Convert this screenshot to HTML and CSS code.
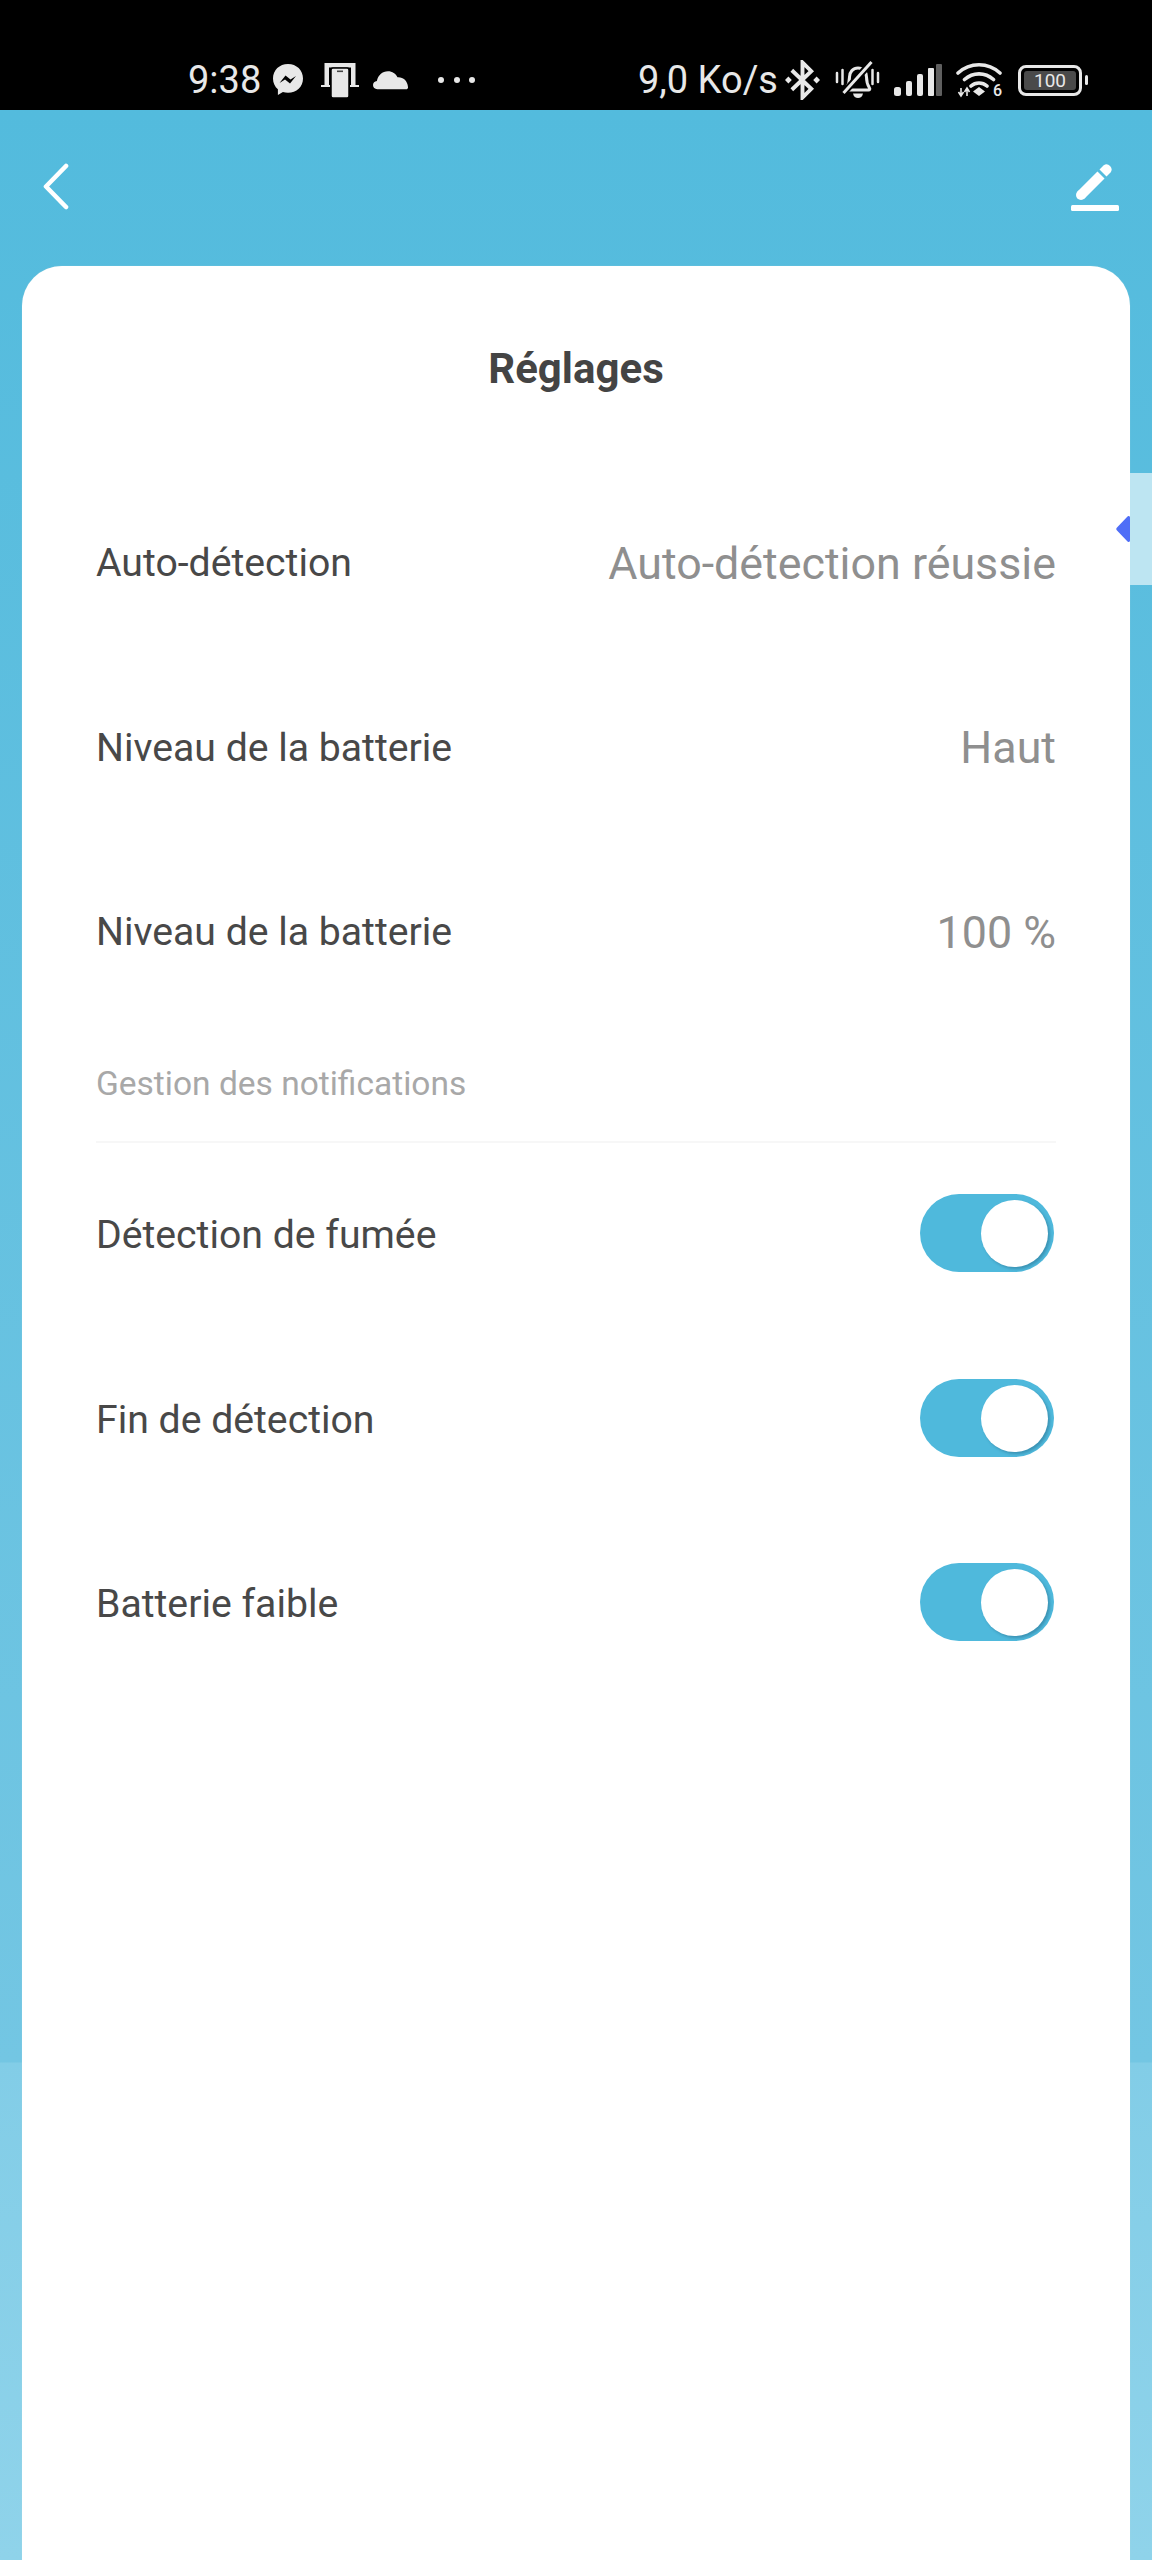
FILE: index.html
```html
<!DOCTYPE html>
<html lang="fr">
<head>
<meta charset="utf-8">
<title>Réglages</title>
<link rel="stylesheet" href="styles.css">
</head>
<body>
<div class="status">
  <div class="status-left">
    <span class="time">9:38</span>
    <svg class="ic-mess" viewBox="0 0 32 34"><path d="M16 1C7.500 1 1 7.200 1 15.400c0 4.400 1.900 8.200 4.900 10.800V32l5-2.900c1.600.5 3.300.7 5.100.7 8.500 0 15-6.200 15-14.400S24.500 1 16 1z" fill="#e8e8e8"/><path d="M7.500 20l6-7.500 5 4 5.500-3.500-6 7.500-5-4z" fill="#000"/></svg>
    <svg class="ic-cast" viewBox="0 0 38 36"><path d="M3.500 1h31v22H30V5.500H8V23H3.500z" fill="#e8e8e8"/><path d="M0 23h9v2H0zM29 23h9v2h-9z" fill="#e8e8e8"/><rect x="10" y="6" width="18" height="30" rx="2" fill="#e8e8e8" stroke="#000" stroke-width="1.500"/><rect x="16" y="8.500" width="6" height="1.600" fill="#444"/></svg>
    <svg class="ic-cloud" viewBox="0 0 36 20"><path d="M4.500 19.500C1.800 19.500 0 17.600 0 15.200c0-2.300 1.700-4 4-4.300C5.100 5.300 9.600 1 15.400 1c4.400 0 8.100 2.500 9.800 6.200 5.500-.5 10.300 3.400 10.800 10 .1 1.300-.7 2.300-2 2.300z" fill="#e8e8e8"/></svg>
    <span class="dots"><i></i><i></i><i></i></span>
  </div>
  <div class="status-right">
    <span class="speed">9,0 Ko/s</span>
    <svg class="ic-bt" viewBox="0 0 36 40"><path d="M7 10l20 19-9 9V2l9 9-20 19" fill="none" stroke="#e8e8e8" stroke-width="4"/><path d="M3.500 16.500L7 20l-3.500 3.500L0 20zM32.500 16.500L36 20l-3.500 3.500L29 20z" fill="#e8e8e8"/></svg>
    <svg class="ic-bell" viewBox="0 0 44 40"><path d="M11 28c2-3 3-6 3-11 0-5 3.500-9 8.500-9s8.500 4 8.500 9c0 5 1 8 3 11 .8 1.200 0 2-1 2H12c-1 0-1.800-.8-1-2z" fill="none" stroke="#e8e8e8" stroke-width="3"/><path d="M17.500 33.500h10c-.5 3-2.500 4.500-5 4.500s-4.500-1.500-5-4.500z" fill="#e8e8e8"/><path d="M8 33L36 2" stroke="#000" stroke-width="7"/><path d="M8 33L36 2" stroke="#e8e8e8" stroke-width="3"/><path d="M1.500 13v9M7 10v14M37 10v14M42.500 13v9" stroke="#e8e8e8" stroke-width="2.500" stroke-linecap="round"/></svg>
    <svg class="ic-signal" viewBox="0 0 48 32"><rect x="0" y="23" width="7" height="9" rx="2.500" fill="#e8e8e8"/><rect x="12" y="17" width="6" height="15" rx="2" fill="#e8e8e8"/><rect x="23" y="10" width="6" height="22" rx="2" fill="#e8e8e8"/><rect x="34" y="4" width="6" height="28" rx="1" fill="#e8e8e8"/><rect x="42" y="0" width="6" height="32" rx="1" fill="#5f5f5f"/></svg>
    <svg class="ic-wifi" viewBox="0 0 46 36"><path d="M2 11c12-11 30-11 42 0M8.500 17.500c8.500-7.500 20.500-7.500 29 0M15 24c4.500-4 11.500-4 16 0" fill="none" stroke="#e8e8e8" stroke-width="3.600" stroke-linecap="round"/><path d="M23 25l6 4.500-6 4.500-6-4.500z" fill="#e8e8e8"/><path d="M5 26v8M11 26v8M2.500 30L5 34l2.500-4M8.500 30L11 26l2.500 4" fill="none" stroke="#e8e8e8" stroke-width="1.600"/></svg>
    <span class="six">6</span>
    <span class="battery"><span class="battery-fill">100</span></span>
    <span class="battery-tip"></span>
  </div>
</div>
<div class="app">
  <div class="topbar">
    <svg class="ic-back" viewBox="0 0 28 48"><path d="M24 3L4 23.500 24 44" fill="none" stroke="#fff" stroke-width="4.600" stroke-linecap="round" stroke-linejoin="round"/></svg>
    <svg class="ic-edit" viewBox="0 0 48 48"><path d="M10 32L30 12" stroke="#fff" stroke-width="10"/><circle cx="10" cy="32" r="5" fill="#fff"/><path d="M28.500 6.500L32.500 2.500A5 5 0 0 1 39.500 9.500L35.500 13.500Z" fill="#fff"/><rect x="0" y="42" width="48" height="6" rx="1.500" fill="#fff"/></svg>
  </div>
  <main class="card">
    <h1 class="title">Réglages</h1>
    <div class="row"><span class="label">Auto-détection</span><span class="value">Auto-détection réussie</span></div>
    <div class="row"><span class="label">Niveau de la batterie</span><span class="value">Haut</span></div>
    <div class="row"><span class="label">Niveau de la batterie</span><span class="value">100 %</span></div>
    <div class="section">Gestion des notifications</div>
    <div class="row"><span class="label">Détection de fumée</span><span class="toggle"><span class="knob"></span></span></div>
    <div class="row"><span class="label">Fin de détection</span><span class="toggle"><span class="knob"></span></span></div>
    <div class="row"><span class="label">Batterie faible</span><span class="toggle"><span class="knob"></span></span></div>
  </main>
  <div class="side-tab">
    <svg class="side-arrow" viewBox="0 0 14 26"><path d="M14 1.500V24.500C14 26 12.500 26.500 11.500 25.500L1 14.500C0 13.500 0 12.500 1 11.500L11.500 .5C12.500 -.5 14 0 14 1.500Z" fill="#4f6ef7"/></svg>
  </div>
</div>
</body>
</html>
```
FILE: styles.css
```css
* { box-sizing: border-box; }
html, body { margin: 0; padding: 0; }
body {
  width: 1152px;
  height: 2560px;
  overflow: hidden;
  background: #000;
  font-family: Roboto, "Liberation Sans", sans-serif;
}
svg { display: block; flex: none; }

.status {
  height: 110px;
  background: #000;
  color: #e8e8e8;
  display: flex;
  justify-content: space-between;
  align-items: flex-end;
  padding: 0 64px 12px 188px;
}
.status-left, .status-right { display: flex; align-items: center; height: 36px; }
.time { font-size: 38px; line-height: 36px; width: 74px; }
.speed { font-size: 38px; line-height: 36px; width: 147px; }
.ic-mess { width: 32px; height: 34px; margin-left: 10px; }
.ic-cast { width: 38px; height: 36px; margin-left: 17px; }
.ic-cloud { width: 35px; height: 20px; margin-left: 14px; }
.dots { display: flex; gap: 9.5px; margin-left: 30px; }
.dots i { width: 6px; height: 6px; border-radius: 50%; background: #e8e8e8; display: block; }
.ic-bt { width: 35px; height: 40px; }
.ic-bell { width: 45px; height: 40px; margin-left: 15px; }
.ic-signal { width: 48px; height: 32px; margin-left: 14px; }
.ic-wifi { width: 46px; height: 36px; margin-left: 14px; }
.six { font-size: 16px; font-weight: 500; line-height: 14px; width: 10px; align-self: flex-end; margin-left: -9px; }
.battery {
  width: 64px;
  height: 31px;
  margin-left: 15px;
  border: 3px solid #e8e8e8;
  border-radius: 8px;
  padding: 3px;
  display: flex;
}
.battery-fill {
  flex: 1;
  background: #4a4a4a;
  border-radius: 3px;
  font-size: 19px;
  line-height: 19px;
  text-align: center;
}
.battery-tip { width: 3px; height: 10px; margin-left: 3px; background: #e8e8e8; border-radius: 2px; }

.app {
  position: relative;
  height: 2450px;
  background: linear-gradient(180deg, #53bbdd 0, #73c6e3 1952px, #82cde7 1953px, #8fd3ea 2450px);
  padding: 0 22px;
}
.topbar {
  height: 156px;
  display: flex;
  justify-content: space-between;
  padding: 53px 11px 0 20px;
}
.ic-back { width: 28px; height: 48px; }
.ic-edit { width: 48px; height: 48px; }

.card {
  background: #fff;
  border-radius: 40px 40px 0 0;
  height: 2294px;
  padding: 0 74px;
  box-shadow: 0 0 1px rgba(210, 225, 225, 0.7);
}
.title {
  margin: 0;
  height: 205px;
  padding-top: 81px;
  text-align: center;
  font-size: 42px;
  line-height: 44px;
  font-weight: 700;
  color: #444;
}
.row {
  height: 184.6px;
  display: flex;
  justify-content: space-between;
  align-items: center;
}
.label { font-size: 39.2px; color: #484848; }
.value { font-size: 44.8px; color: #8f8f8f; }
.section {
  height: 118px;
  padding-top: 39px;
  font-size: 33.5px;
  line-height: 40px;
  color: #a8a8a8;
  border-bottom: 2px solid #f7f7f7;
}
.toggle {
  width: 134px;
  height: 78px;
  margin: 0 2px 4px 0;
  border-radius: 39px;
  background: #4fb9dc;
  display: flex;
  justify-content: flex-end;
  align-items: flex-start;
  padding: 6px 6px 0 0;
}
.knob {
  width: 67px;
  height: 67px;
  border-radius: 50%;
  background: #fff;
  box-shadow: 2px 2px 3px rgba(30, 90, 120, 0.4);
}
.side-tab {
  position: absolute;
  left: 1130px;
  top: 363px;
  width: 22px;
  height: 112px;
  background: #bde5f2;
}
.side-arrow {
  position: absolute;
  left: -14px;
  top: 43px;
  width: 14px;
  height: 26px;
}
```
